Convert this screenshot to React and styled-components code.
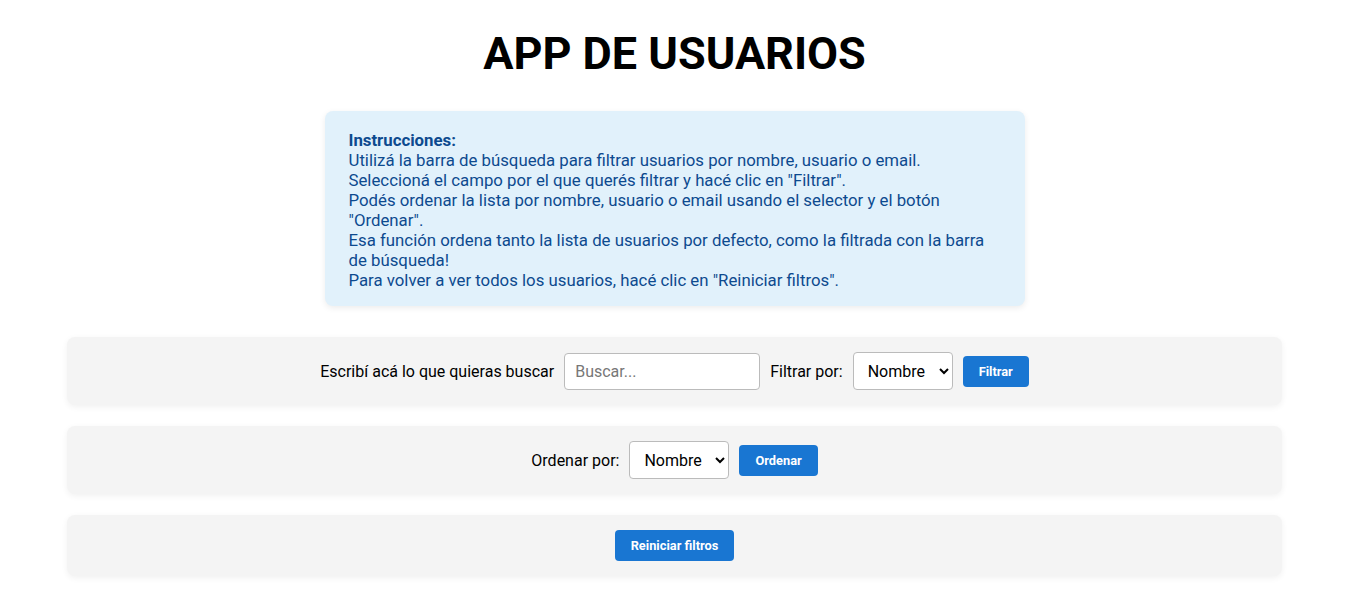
import React from 'react'
import styled, {createGlobalStyle} from 'styled-components'

const GlobalStyle = createGlobalStyle`
    body {
        margin: 0;
        background: #fff;
        font-family: Roboto, 'Liberation Sans', sans-serif;
        color: #000;
    }
`

const Page = styled.div`
    display: flex;
    flex-direction: column;
    align-items: center;
`

const Title = styled.h1`
    margin: 26px 0 29px;
    font-size: 45px;
    font-weight: 700;
    line-height: 56px;
`

const Instructions = styled.div`
    box-sizing: border-box;
    width: 700px;
    padding: 19px 24px 16px;
    background: #e1f1fb;
    border-radius: 8px;
    box-shadow: 0 2px 6px rgba(0, 0, 0, .08);
    color: #0d4a8f;
    font-size: 16.8px;
    line-height: 20px;
    margin-bottom: 31px;

    strong {
        font-weight: 700;
    }
`

const Bar = styled.div`
    box-sizing: border-box;
    width: 90%;
    display: flex;
    justify-content: center;
    align-items: center;
    gap: 10px;
    padding: 15px;
    margin-bottom: 21px;
    background: #f4f4f4;
    border-radius: 8px;
    box-shadow: 0 2px 6px rgba(0, 0, 0, .06);
    font-size: 16px;
`

const Label = styled.label`
    font-size: 16px;
`

const SearchInput = styled.input`
    box-sizing: border-box;
    width: 196px;
    height: 37px;
    padding: 0 10px;
    border: 1px solid #bbb;
    border-radius: 4px;
    font-family: inherit;
    font-size: 16px;
    color: #000;
    background: #fff;

    &::placeholder {
        color: #777;
    }
`

const Select = styled.select`
    box-sizing: border-box;
    width: 100px;
    height: 38px;
    padding: 0 6px 0 10px;
    border: 1px solid #bbb;
    border-radius: 4px;
    font-family: inherit;
    font-size: 16px;
    color: #000;
    background: #fff;
`

const Button = styled.button`
    box-sizing: border-box;
    height: 31px;
    padding: 0 16px;
    border: none;
    border-radius: 4px;
    background: #1976d2;
    color: #fff;
    font-family: inherit;
    font-size: 12.8px;
    font-weight: 700;
    cursor: pointer;
`

export default function App() {
    return (
        <Page>
            <GlobalStyle/>
            <Title>APP DE USUARIOS</Title>

            <Instructions>
                <strong>Instrucciones:</strong><br/>
                Utilizá la barra de búsqueda para filtrar usuarios por nombre, usuario o email.<br/>
                Seleccioná el campo por el que querés filtrar y hacé clic en "Filtrar".<br/>
                Podés ordenar la lista por nombre, usuario o email usando el selector y el botón "Ordenar".<br/>
                Esa función ordena tanto la lista de usuarios por defecto, como la filtrada con la barra de búsqueda!<br/>
                Para volver a ver todos los usuarios, hacé clic en "Reiniciar filtros".
            </Instructions>

            <Bar>
                <Label htmlFor='search'>Escribí acá lo que quieras buscar</Label>
                <SearchInput id='search' placeholder='Buscar...'/>
                <Label htmlFor='filter'>Filtrar por:</Label>
                <Select id='filter' defaultValue='name'>
                    <option value='name'>Nombre</option>
                    <option value='username'>Usuario</option>
                    <option value='email'>Email</option>
                </Select>
                <Button>Filtrar</Button>
            </Bar>

            <Bar>
                <Label htmlFor='sort'>Ordenar por:</Label>
                <Select id='sort' defaultValue='name'>
                    <option value='name'>Nombre</option>
                    <option value='username'>Usuario</option>
                    <option value='email'>Email</option>
                </Select>
                <Button>Ordenar</Button>
            </Bar>

            <Bar>
                <Button>Reiniciar filtros</Button>
            </Bar>
        </Page>
    )
}
